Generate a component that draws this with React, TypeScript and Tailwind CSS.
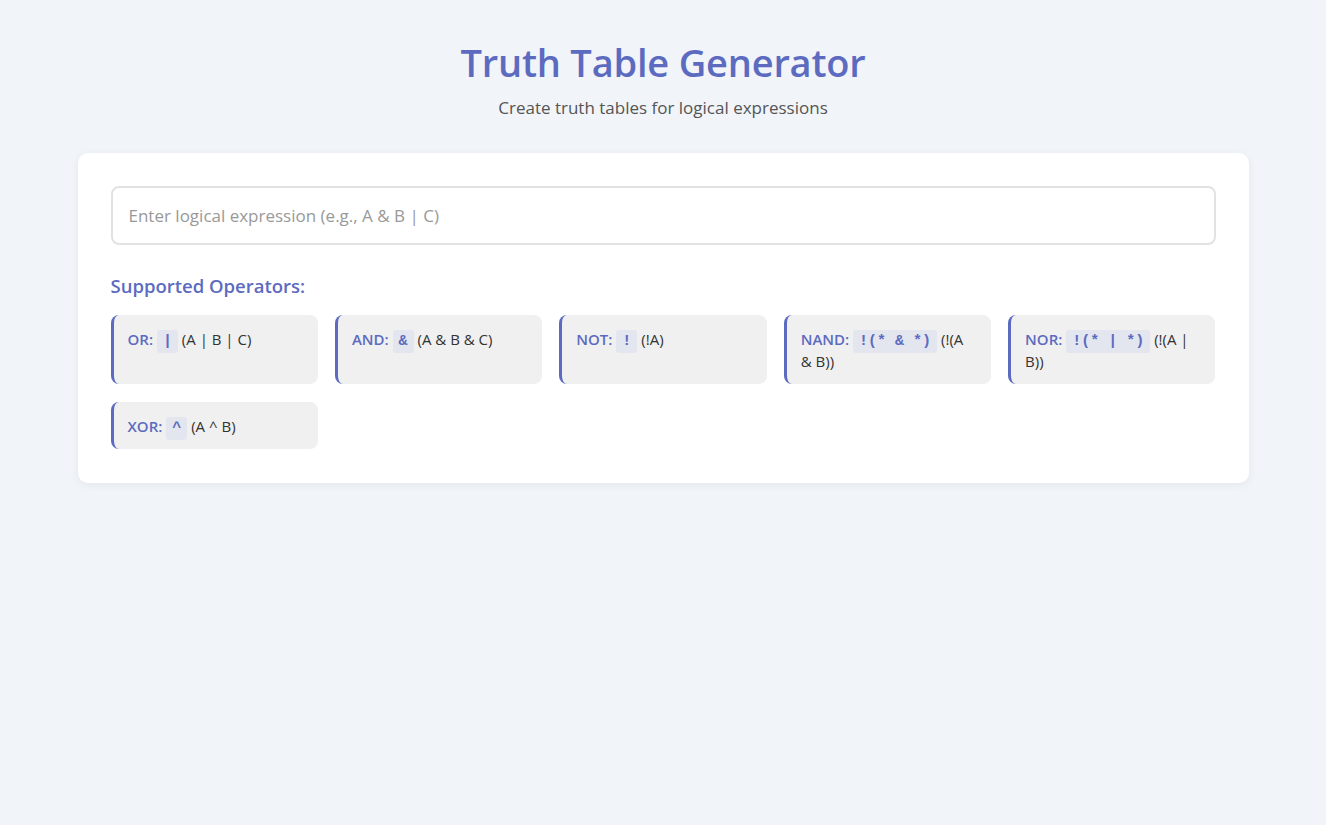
import React from "react";

const ops: { name: string; code: string; ex: string }[] = [
  { name: "OR:", code: "|", ex: "(A | B | C)" },
  { name: "AND:", code: "&", ex: "(A & B & C)" },
  { name: "NOT:", code: "!", ex: "(!A)" },
  { name: "NAND:", code: "!(* & *)", ex: "(!(A & B))" },
  { name: "NOR:", code: "!(* | *)", ex: "(!(A | B))" },
  { name: "XOR:", code: "^", ex: "(A ^ B)" },
];

export default function App() {
  return (
    <div
      className="min-h-[825px] w-full bg-[#f1f4f8] pt-[38px]"
      style={{ fontFamily: '"Open Sans", "Noto Sans", sans-serif' }}
    >
      <div className="mx-auto w-[1171px]">
        <header className="text-center">
          <h1 className="text-[38px] font-semibold leading-[48px] text-[#5c6bc0] tracking-[-0.2px]">
            Truth Table Generator
          </h1>
          <p className="mt-[10px] text-[17px] leading-[24px] text-[#555]">
            Create truth tables for logical expressions
          </p>
        </header>
        <div className="mt-[33px] rounded-[10px] bg-white px-[33px] pt-[33px] pb-[34px] shadow-[0_2px_10px_rgba(0,0,0,0.06)]">
          <input
            type="text"
            placeholder="Enter logical expression (e.g., A & B | C)"
            className="block h-[59px] w-full rounded-[8px] border-2 border-[#e2e2e2] px-[16px] text-[17px] text-[#333] outline-none placeholder:text-[#999]"
          />
          <h3 className="mt-[29px] text-[18.5px] font-semibold leading-[24px] text-[#5c6bc0]">
            Supported Operators:
          </h3>
          <div className="mt-[17px] grid grid-cols-5 gap-x-[17px] gap-y-[18px]">
            {ops.map((o) => (
              <div
                key={o.name}
                className="rounded-[8px] border-l-[3px] border-[#5c6bc0] bg-[#f0f0f0] py-[12.5px] pl-[14px] pr-[16px] text-[15px] leading-[22px] text-[#333]"
              >
                <span className="font-semibold text-[#5c6bc0]">{o.name}</span>{" "}
                <code
                  className="rounded-[3px] bg-[#e3e6ee] px-[6px] py-[3px] text-[15px] leading-[15px] font-bold text-[#5c6bc0] whitespace-pre"
                  style={{ fontFamily: '"Liberation Mono", monospace' }}
                >
                  {o.code}
                </code>{" "}
                {o.ex}
              </div>
            ))}
          </div>
        </div>
      </div>
    </div>
  );
}
